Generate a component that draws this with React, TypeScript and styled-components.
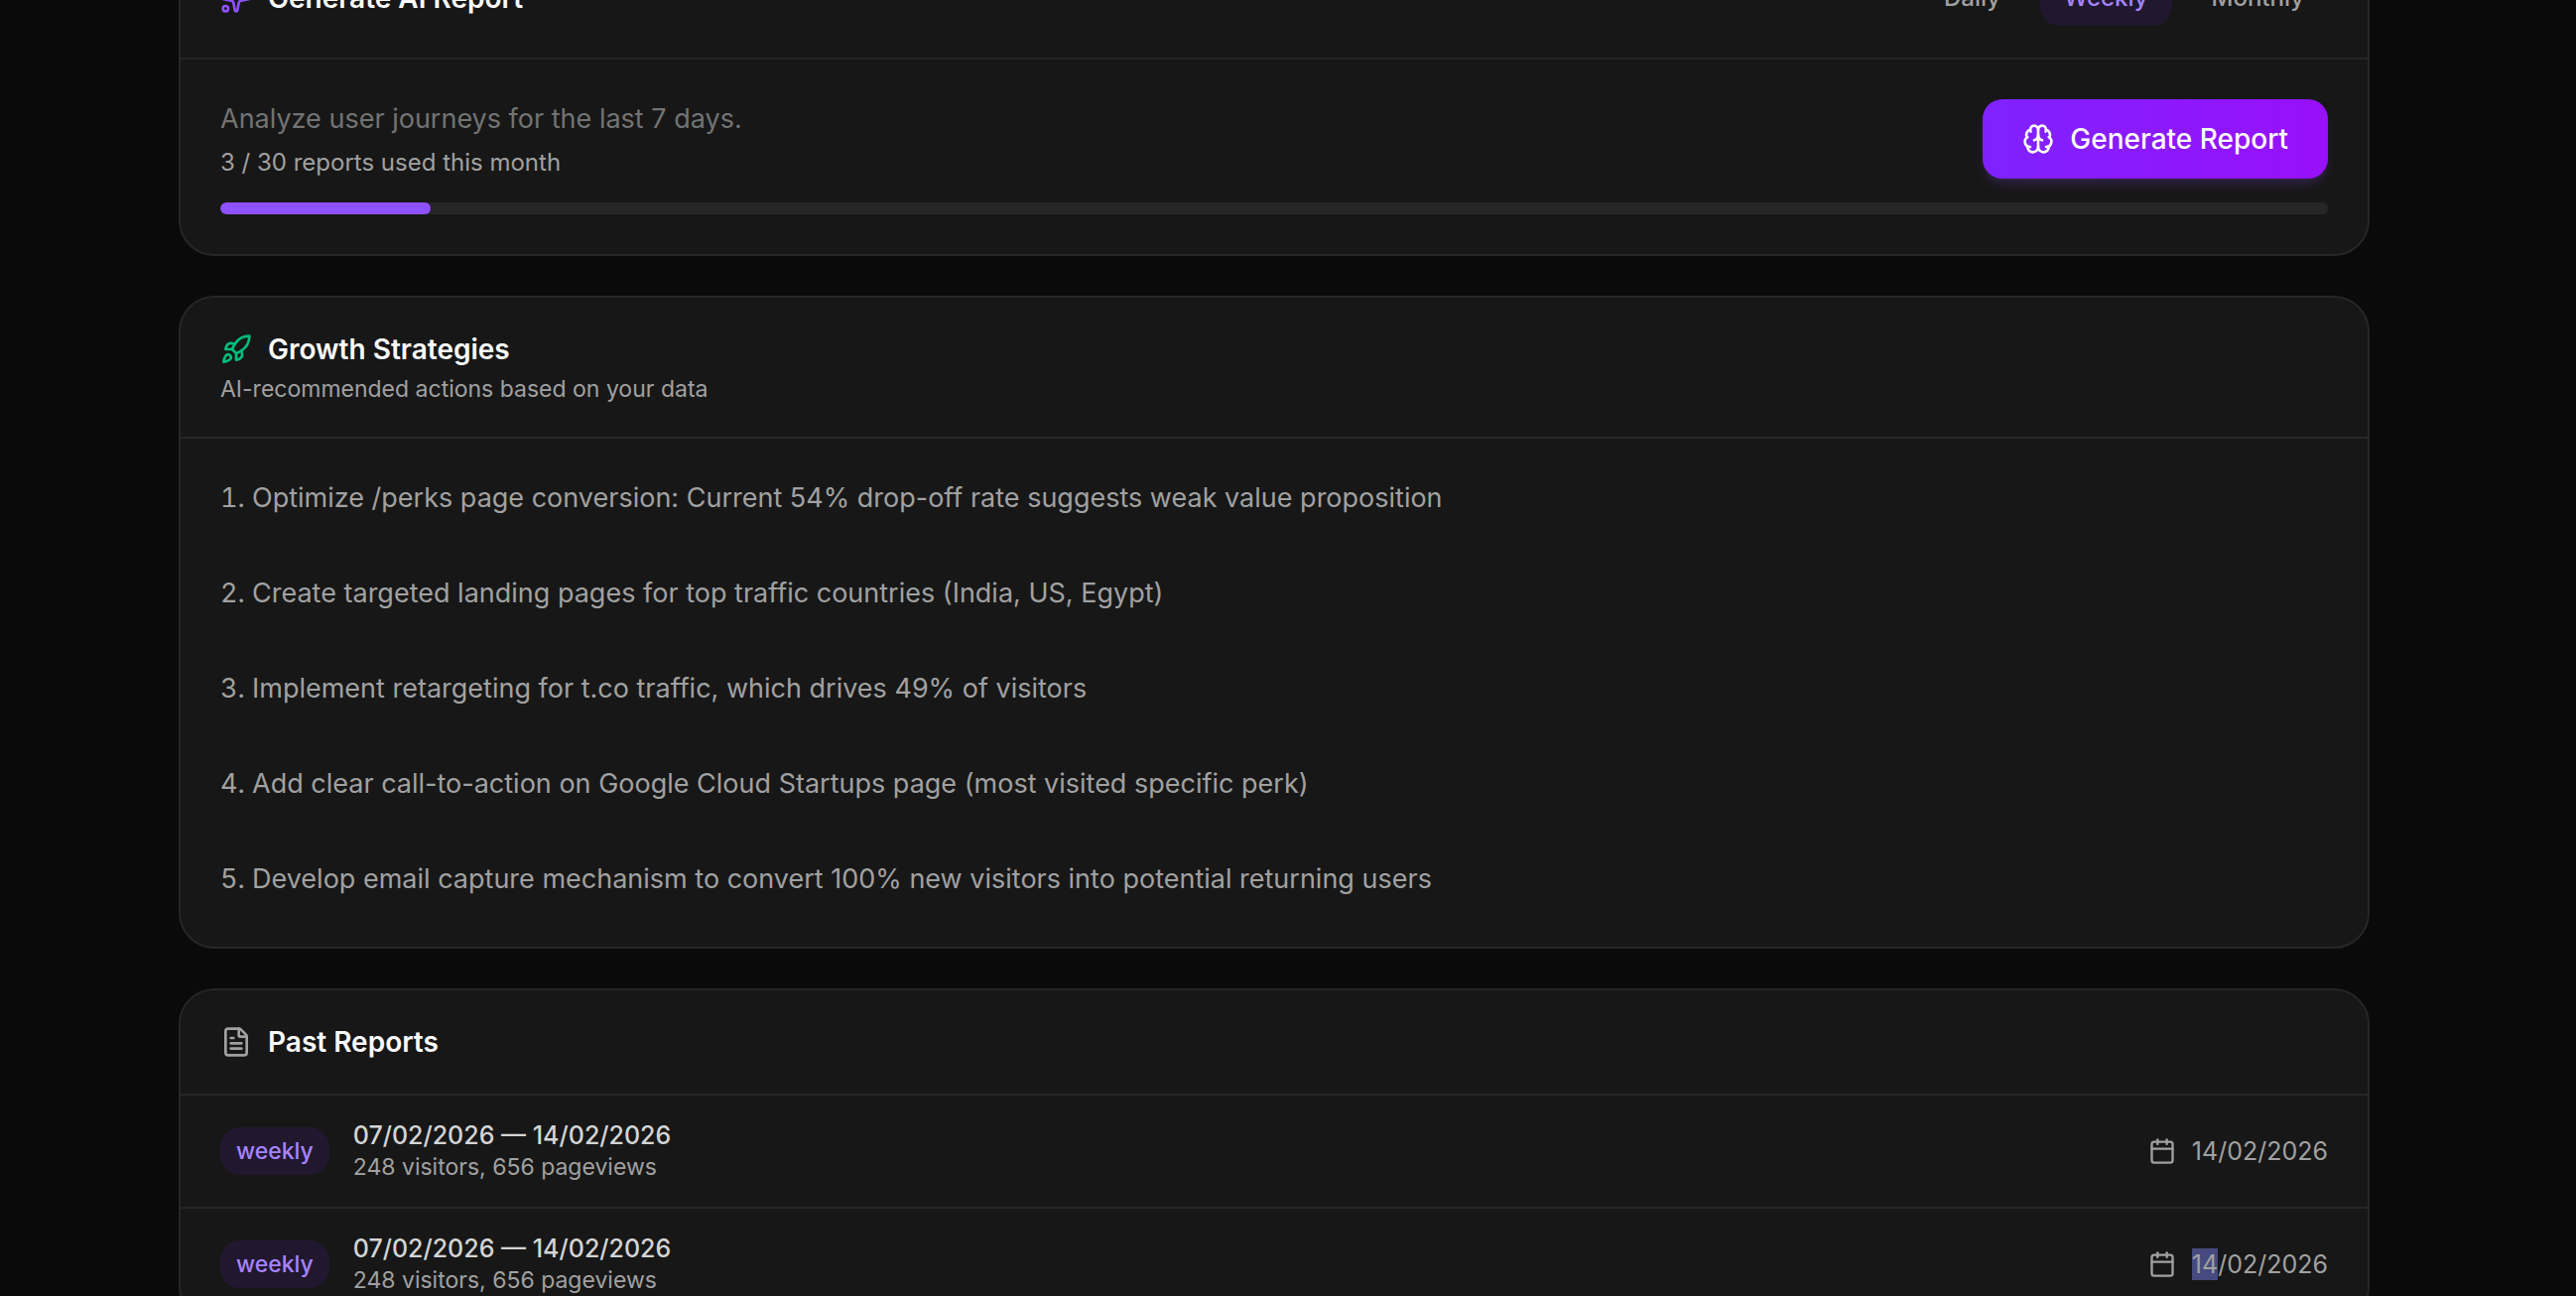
import React from "react";
import styled, { createGlobalStyle } from "styled-components";
import { Brain, Calendar, FileText, Rocket, Sparkles } from "lucide-react";

const GlobalStyle = createGlobalStyle`
  *, *::before, *::after { box-sizing: border-box; }
  html { background: #0a0a0a; }
  body {
    margin: 0;
    background: #0a0a0a;
    color: #fafafa;
    font-family: Inter, "Liberation Sans", sans-serif;
    font-size: 24px;
    line-height: 32px;
  }
  h2, p, ol, ul { margin: 0; padding: 0; }
  button { font: inherit; border: 0; cursor: pointer; }
`;

const Viewport = styled.div`
  height: 100vh;
  overflow: hidden;
`;

const Page = styled.main`
  display: flex;
  flex-direction: column;
  gap: 40px;
  margin-top: -64px;
  padding: 0 208px 40px 180px;
`;

const Card = styled.section`
  flex: none;
  border: 2px solid #262626;
  border-radius: 36px;
  background: #171717;
  overflow: hidden;
`;

const CardHeader = styled.header`
  display: flex;
  align-items: center;
  justify-content: space-between;
  padding: 32px 40px;
  border-bottom: 2px solid #262626;
`;

const Heading = styled.div`
  display: flex;
  flex-direction: column;
  gap: 4px;
`;

const Title = styled.h2<{ $icon: string }>`
  display: flex;
  align-items: center;
  gap: 16px;
  font-size: 28px;
  line-height: 40px;
  font-weight: 600;

  svg {
    width: 32px;
    height: 32px;
    color: ${(p) => p.$icon};
  }
`;

const Tabs = styled.div`
  display: flex;
  gap: 16px;
`;

const Tab = styled.button<{ $active?: boolean }>`
  padding: 12px 24px;
  border-radius: 20px;
  font-weight: 500;
  background: ${(p) => (p.$active ? "#21182f" : "transparent")};
  color: ${(p) => (p.$active ? "#a684ff" : "#a1a1a1")};
`;

const GenerateBody = styled.div`
  display: flex;
  flex-direction: column;
  gap: 24px;
  padding: 40px;
`;

const GenerateRow = styled.div`
  display: flex;
  align-items: center;
  justify-content: space-between;
`;

const Usage = styled.div`
  display: flex;
  flex-direction: column;
  gap: 8px;
`;

const Lead = styled.p`
  font-size: 27px;
  line-height: 40px;
  color: #737373;
`;

const Quota = styled.p`
  color: #a1a1a1;
`;

const Muted = styled.p`
  font-size: 23px;
  color: #a1a1a1;
`;

const PrimaryButton = styled.button`
  display: flex;
  align-items: center;
  gap: 16px;
  padding: 20px 40px;
  border-radius: 20px;
  background: linear-gradient(to right, #7f22fe, #9810fa);
  box-shadow: 0 8px 12px -2px rgba(142, 81, 255, 0.16), 0 4px 8px -4px rgba(142, 81, 255, 0.16);
  color: #fafafa;
  font-size: 28px;
  line-height: 40px;
  font-weight: 500;

  svg {
    width: 32px;
    height: 32px;
  }
`;

const Track = styled.div`
  height: 12px;
  border-radius: 6px;
  background: #262626;
  overflow: hidden;
`;

const Fill = styled.div`
  height: 100%;
  border-radius: 6px;
  background: #8e51ff;
`;

const Strategies = styled.ol`
  display: flex;
  flex-direction: column;
  gap: 40px;
  padding: 32px 40px 40px 72px;
  font-size: 27px;
  line-height: 56px;
  color: #a1a1a1;
`;

const Reports = styled.ul`
  list-style: none;
`;

const Report = styled.li`
  display: flex;
  align-items: center;
  gap: 24px;
  padding: 24px 40px;

  & + & {
    border-top: 2px solid #262626;
  }
`;

const Badge = styled.span`
  padding: 8px 16px;
  border-radius: 20px;
  background: #21182f;
  color: #a684ff;
  font-size: 23px;
  font-weight: 500;
`;

const Range = styled.p`
  font-size: 25px;
  font-weight: 500;
  color: #d4d4d4;
`;

const Created = styled.div`
  display: flex;
  align-items: center;
  gap: 16px;
  margin-left: auto;
  font-size: 25px;
  color: #a1a1a1;

  svg {
    width: 28px;
    height: 28px;
  }
`;

const Selected = styled.mark`
  display: inline-block;
  background: #464a7f;
  color: inherit;
`;

const periods = ["Daily", "Weekly", "Monthly"];

const strategies = [
  "Optimize /perks page conversion: Current 54% drop-off rate suggests weak value proposition",
  "Create targeted landing pages for top traffic countries (India, US, Egypt)",
  "Implement retargeting for t.co traffic, which drives 49% of visitors",
  "Add clear call-to-action on Google Cloud Startups page (most visited specific perk)",
  "Develop email capture mechanism to convert 100% new visitors into potential returning users",
];

const reports = [
  { id: 1, range: "07/02/2026 — 14/02/2026", day: "14", rest: "/02/2026", selected: false },
  { id: 2, range: "07/02/2026 — 14/02/2026", day: "14", rest: "/02/2026", selected: true },
];

const used = 3;
const limit = 30;

export default function App() {
  const [period, setPeriod] = React.useState("Weekly");

  return (
    <Viewport>
      <GlobalStyle />
      <Page>
        <Card>
          <CardHeader>
            <Title $icon="#8e51ff">
              <Sparkles />
              Generate AI Report
            </Title>
            <Tabs>
              {periods.map((p) => (
                <Tab key={p} type="button" $active={p === period} aria-pressed={p === period} onClick={() => setPeriod(p)}>
                  {p}
                </Tab>
              ))}
            </Tabs>
          </CardHeader>
          <GenerateBody>
            <GenerateRow>
              <Usage>
                <Lead>Analyze user journeys for the last 7 days.</Lead>
                <Quota>
                  {used} / {limit} reports used this month
                </Quota>
              </Usage>
              <PrimaryButton type="button">
                <Brain />
                Generate Report
              </PrimaryButton>
            </GenerateRow>
            <Track role="progressbar" aria-valuenow={used} aria-valuemin={0} aria-valuemax={limit} aria-label="Reports used">
              <Fill style={{ width: `${(used / limit) * 100}%` }} />
            </Track>
          </GenerateBody>
        </Card>

        <Card>
          <CardHeader>
            <Heading>
              <Title $icon="#00bc7d">
                <Rocket />
                Growth Strategies
              </Title>
              <Muted>AI-recommended actions based on your data</Muted>
            </Heading>
          </CardHeader>
          <Strategies>
            {strategies.map((s) => (
              <li key={s}>{s}</li>
            ))}
          </Strategies>
        </Card>

        <Card>
          <CardHeader>
            <Title $icon="#a1a1a1">
              <FileText />
              Past Reports
            </Title>
          </CardHeader>
          <Reports>
            {reports.map((r) => (
              <Report key={r.id}>
                <Badge>weekly</Badge>
                <div>
                  <Range>{r.range}</Range>
                  <Muted>248 visitors, 656 pageviews</Muted>
                </div>
                <Created>
                  <Calendar />
                  <span>
                    {r.selected ? <Selected>{r.day}</Selected> : r.day}
                    {r.rest}
                  </span>
                </Created>
              </Report>
            ))}
          </Reports>
        </Card>
      </Page>
    </Viewport>
  );
}
